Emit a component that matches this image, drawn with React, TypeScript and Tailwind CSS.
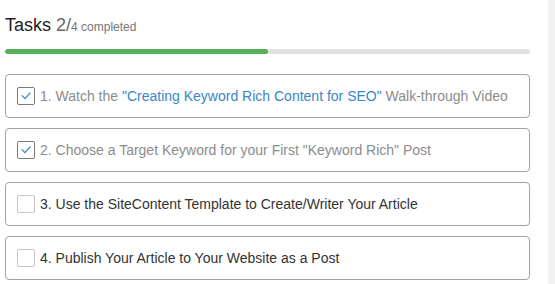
import { ReactNode } from 'react';

type Task = {
  id: number;
  done: boolean;
  label: ReactNode;
};

const tasks: Task[] = [
  {
    id: 1,
    done: true,
    label: (
      <>
        1. Watch the{' '}
        <span className="text-[#3a86c8]">
          "Creating Keyword Rich Content for SEO"
        </span>{' '}
        Walk-through Video
      </>
    ),
  },
  {
    id: 2,
    done: true,
    label: <>2. Choose a Target Keyword for your First "Keyword Rich" Post</>,
  },
  {
    id: 3,
    done: false,
    label: <>3. Use the SiteContent Template to Create/Writer Your Article</>,
  },
  {
    id: 4,
    done: false,
    label: <>4. Publish Your Article to Your Website as a Post</>,
  },
];

function CheckBox({ checked }: { checked: boolean }) {
  return (
    <span
      className={
        checked
          ? 'flex items-center justify-center size-[18px] rounded-[2px] border border-[#7a7a7a] bg-white'
          : 'flex items-center justify-center size-[18px] rounded-[2px] border border-[#c4c4c4] bg-white'
      }
    >
      {checked && (
        <svg width="10" height="8" viewBox="0 0 10 8" fill="none">
          <path
            d="M1 3.6 L4 6.6 L9 1"
            stroke="#3a86c8"
            strokeWidth="1.2"
            strokeLinecap="round"
            strokeLinejoin="round"
          />
        </svg>
      )}
    </span>
  );
}

export default function App() {
  const completed = tasks.filter((t) => t.done).length;
  const pct = (completed / tasks.length) * 100;

  return (
    <div className="flex w-[555px] h-[284px] bg-white overflow-hidden font-['Liberation_Sans',Arial,sans-serif]">
      <div className="w-[548px] pl-[5px] pt-[14px]">
        <div className="w-[525px]">
          <h2 className="flex items-baseline text-[18px] leading-[22px] text-[#222]">
            Tasks
            <span className="ml-[5px] text-[#666]">{completed}/</span>
            <span className="text-[12px] text-[#777]">
              {tasks.length} completed
            </span>
          </h2>
          <div className="mt-[11px] h-[5px] rounded-full bg-[#e2e2e2] overflow-hidden">
            <div
              className="h-full rounded-full bg-[#55b057]"
              style={{ width: `${pct}%` }}
            />
          </div>
          <ul className="mt-[20px] flex flex-col gap-[10px]">
            {tasks.map((task) => (
              <li
                key={task.id}
                className="flex items-center h-[44px] pl-[11px] pr-[12px] gap-[5px] rounded-[4px] border border-[#a3a3a3]"
              >
                <CheckBox checked={task.done} />
                <span
                  className={
                    task.done
                      ? 'text-[14px] text-[#8c8c8c] whitespace-nowrap'
                      : 'text-[14px] text-[#333] whitespace-nowrap'
                  }
                >
                  {task.label}
                </span>
              </li>
            ))}
          </ul>
        </div>
      </div>
      <div className="flex-1 bg-[#f1f1f1]" />
    </div>
  );
}
